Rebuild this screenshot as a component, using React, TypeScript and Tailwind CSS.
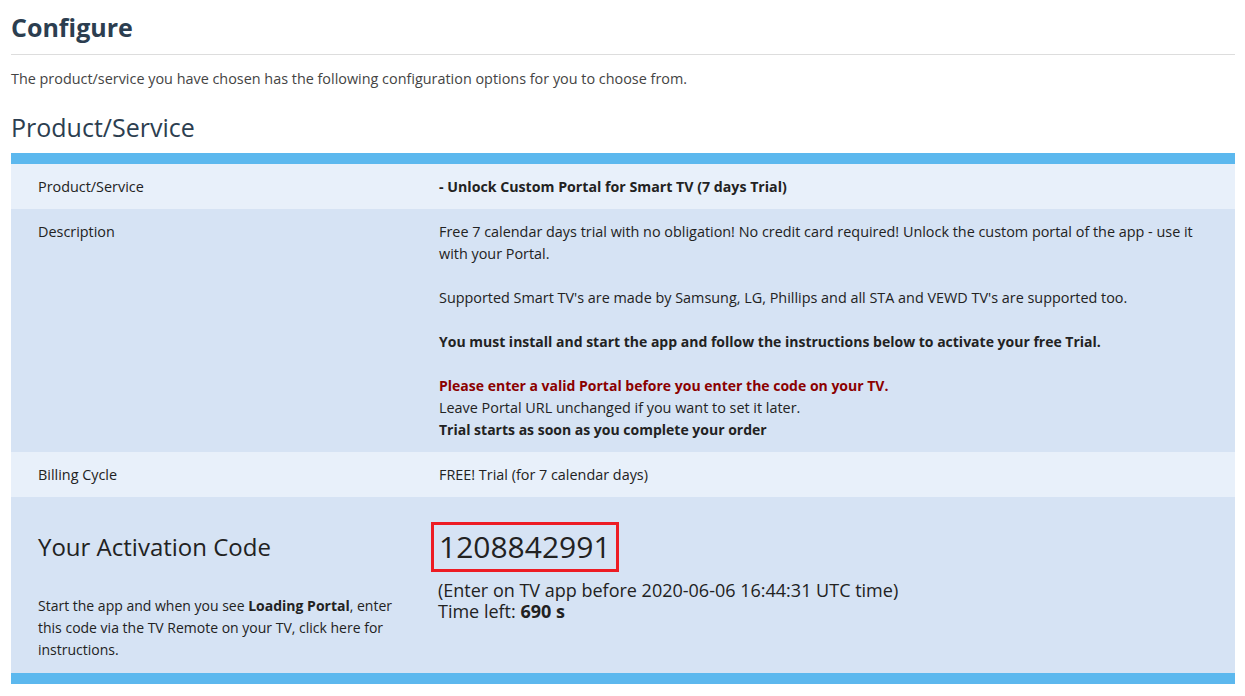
import React from 'react';

const font = { fontFamily: '"Open Sans", "Noto Sans", sans-serif' };

const Row: React.FC<{ label: React.ReactNode; light?: boolean; children: React.ReactNode }> = ({ label, light, children }) => (
  <div className={`flex ${light ? 'bg-[#e8f0fa]' : 'bg-[#d6e3f4]'}`}>
    <div className="w-[401px] shrink-0 pl-[27px] pt-[12px] pb-[11px]">{label}</div>
    <div className="flex-1 pl-[27px] pr-6 pt-[12px] pb-[11px]">{children}</div>
  </div>
);

export default function App() {
  return (
    <div className="min-h-screen bg-white pl-[11px] pr-[10px] text-[14.4px] leading-[22px] text-[#222]" style={font}>
      <h1 className="pt-[10px] pb-[10px] text-[25px] leading-[34px] font-bold text-[#2c3e50] border-b border-[#dddddd]">
        Configure
      </h1>
      <p className="mt-[13px] text-[#444]">
        The product/service you have chosen has the following configuration options for you to choose from.
      </p>
      <h2 className="mt-[20px] text-[25px] leading-[34px] text-[#2c3e50]">Product/Service</h2>
      <div className="mt-[9px] border-t-[11px] border-b-[11px] border-[#5cb8ee]">
        <Row light label="Product/Service">
          <span className="font-bold text-[14.2px]">- Unlock Custom Portal for Smart TV (7 days Trial)</span>
        </Row>
        <Row label="Description">
          <p>
            Free 7 calendar days trial with no obligation! No credit card required! Unlock the custom portal of the app - use it with
            your Portal.
          </p>
          <p className="mt-[22px]">Supported Smart TV's are made by Samsung, LG, Phillips and all STA and VEWD TV's are supported too.</p>
          <p className="mt-[22px] font-bold text-[14px]">
            You must install and start the app and follow the instructions below to activate your free Trial.
          </p>
          <p className="mt-[22px] font-bold text-[14px] text-[#8b0000]">Please enter a valid Portal before you enter the code on your TV.</p>
          <p>Leave Portal URL unchanged if you want to set it later.</p>
          <p className="font-bold text-[14px]">Trial starts as soon as you complete your order</p>
        </Row>
        <Row light label="Billing Cycle">
          FREE! Trial (for 7 calendar days)
        </Row>
        <div className="flex bg-[#d6e3f4]">
          <div className="w-[401px] shrink-0 pl-[27px] pt-[34px] pb-[12px]">
            <h3 className="text-[24px] leading-[32px]">Your Activation Code</h3>
            <p className="mt-[32px] text-[14px]">
              Start the app and when you see <b>Loading Portal</b>, enter this code via the TV Remote on your TV, click here for
              instructions.
            </p>
          </div>
          <div className="flex-1 pl-[19px] pt-[25px]">
            <div className="inline-block border-[3px] border-[#ed1c24] px-[5px] text-[30px] leading-[44px]">1208842991</div>
            <div className="pl-[7px] mt-[8px] text-[18px] leading-[21px]">
              <div>(Enter on TV app before 2020-06-06 16:44:31 UTC time)</div>
              <div>
                Time left: <b>690 s</b>
              </div>
            </div>
          </div>
        </div>
      </div>
    </div>
  );
}
